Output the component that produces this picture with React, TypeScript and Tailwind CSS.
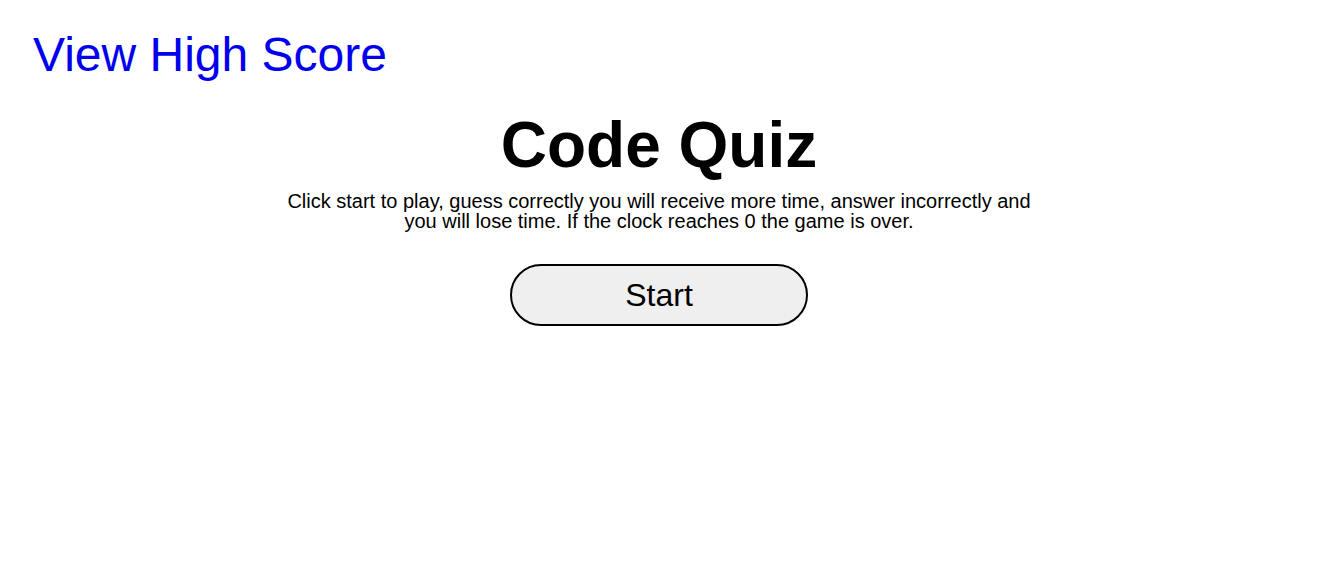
export default function App() {
  return (
    <div className="min-h-[562px] bg-white font-['Liberation_Sans',Arial,sans-serif] text-black">
      <header className="px-[33px] pt-[27px]">
        <a href="#" className="text-[48px] leading-[55px] text-[#0000ee] no-underline">
          View High Score
        </a>
      </header>

      <main className="flex flex-col items-center pr-[6px]">
        <h1 className="mt-[26px] text-[64px] font-bold leading-[74px]">Code Quiz</h1>
        <p className="mt-[9px] w-[750px] text-center text-[20px] leading-[20px]">
          Click start to play, guess correctly you will receive more time, answer incorrectly and you will
          lose time. If the clock reaches 0 the game is over.
        </p>
        <button className="mt-[33px] h-[62px] w-[298px] rounded-full border-2 border-black bg-[#efefef] text-[32px] leading-none">
          Start
        </button>
      </main>
    </div>
  );
}
